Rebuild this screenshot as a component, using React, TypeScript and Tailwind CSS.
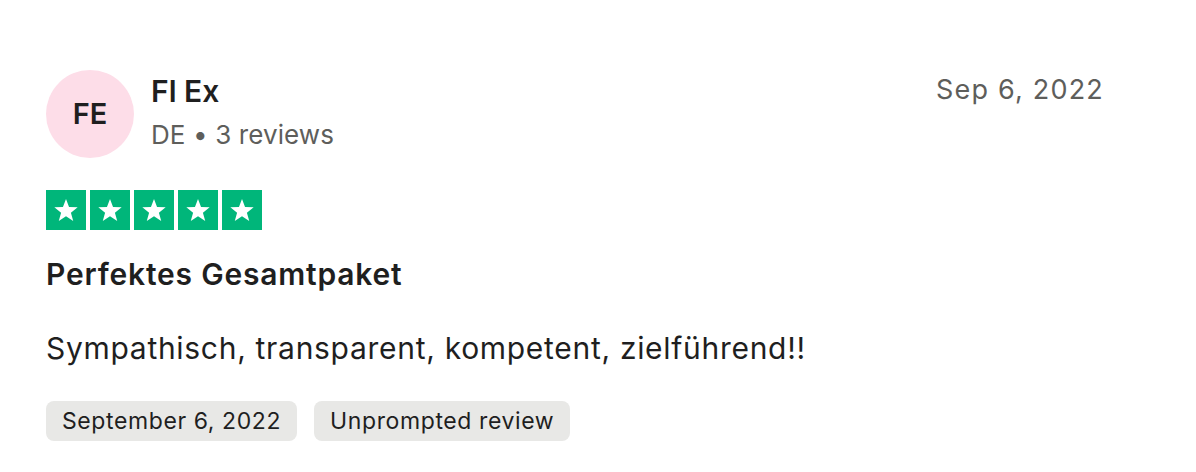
import React from "react";

const Star = () => (
  <div className="flex h-10 w-10 items-center justify-center bg-[#00b67a]">
    <svg viewBox="0 0 24 24" className="h-7 w-7" fill="#fff">
      <path d="M12 2.5l2.6 6.9 7.4.3-5.8 4.6 2 7.1L12 17.3l-6.2 4.1 2-7.1L2 9.7l7.4-.3z" />
    </svg>
  </div>
);

export default function App() {
  return (
    <div
      className="min-h-screen bg-white pl-[46px] pr-[92px] pt-[70px] text-[#1f1f1f]"
      style={{ fontFamily: "Inter, 'Noto Sans', sans-serif" }}
    >
      {/* header: avatar, name, date */}
      <div className="flex items-start justify-between">
        <div className="flex items-start gap-[17px]">
          <div className="flex h-[88px] w-[88px] items-center justify-center rounded-full bg-[#fddde8] text-[29px] font-semibold">
            FE
          </div>
          <div className="pt-[2px]">
            <div className="text-[30px] font-semibold leading-[38px]">Fl Ex</div>
            <div className="mt-[9px] text-[26px] leading-[32px] tracking-[0.1px] text-[#5e5e5b]">DE • 3 reviews</div>
          </div>
        </div>
        <div className="pt-[4px] text-[27px] leading-[32px] tracking-[1.2px] text-[#5e5e5b]">Sep 6, 2022</div>
      </div>

      {/* rating */}
      <div className="mt-[32px] flex gap-1">
        <Star />
        <Star />
        <Star />
        <Star />
        <Star />
      </div>

      <h2 className="mt-[26px] text-[30px] font-semibold leading-[36px] tracking-[0.8px]">Perfektes Gesamtpaket</h2>

      <p className="mt-[38px] text-[30px] leading-[36px] tracking-[0.7px]">Sympathisch, transparent, kompetent, zielführend!!</p>

      <div className="mt-[35px] flex gap-[17px]">
        <span className="rounded-lg bg-[#e8e8e6] px-4 py-[6px] text-[23px] leading-[28px] tracking-[0.6px]">September 6, 2022</span>
        <span className="rounded-lg bg-[#e8e8e6] px-4 py-[6px] text-[23px] leading-[28px] tracking-[0.6px]">Unprompted review</span>
      </div>
    </div>
  );
}
